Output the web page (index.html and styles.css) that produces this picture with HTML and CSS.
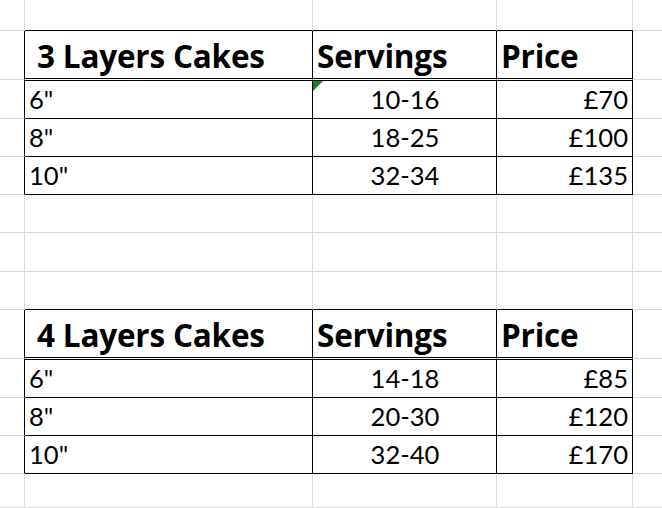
FILE: index.html
```html
<!DOCTYPE html>
<html lang="en">
<head>
<meta charset="utf-8">
<title>Cake prices</title>
<link rel="stylesheet" href="styles.css">
</head>
<body>
<div class="sheet">
  <div class="row h31">
    <div class="cell c0"></div><div class="cell c1 tb"></div><div class="cell c2 tb"></div><div class="cell c3 tb"></div><div class="cell c4"></div>
  </div>
  <div class="row h49">
    <div class="cell c0 tl"></div>
    <div class="cell c1 th first"><span>3 Layers Cakes</span></div>
    <div class="cell c2 th"><span>Servings</span></div>
    <div class="cell c3 th"><span>Price</span></div>
    <div class="cell c4"></div>
  </div>
  <div class="row h39">
    <div class="cell c0 tl"></div>
    <div class="cell c1 td">6"</div>
    <div class="cell c2 td center"><span class="flag"></span>10-16</div>
    <div class="cell c3 td right">£70</div>
    <div class="cell c4"></div>
  </div>
  <div class="row h38">
    <div class="cell c0 tl"></div>
    <div class="cell c1 td">8"</div>
    <div class="cell c2 td center">18-25</div>
    <div class="cell c3 td right">£100</div>
    <div class="cell c4"></div>
  </div>
  <div class="row h38">
    <div class="cell c0 tl"></div>
    <div class="cell c1 td">10"</div>
    <div class="cell c2 td center">32-34</div>
    <div class="cell c3 td right">£135</div>
    <div class="cell c4"></div>
  </div>
  <div class="row h38">
    <div class="cell c0"></div><div class="cell c1"></div><div class="cell c2"></div><div class="cell c3"></div><div class="cell c4"></div>
  </div>
  <div class="row h39">
    <div class="cell c0"></div><div class="cell c1"></div><div class="cell c2"></div><div class="cell c3"></div><div class="cell c4"></div>
  </div>
  <div class="row h38">
    <div class="cell c0"></div><div class="cell c1 tb"></div><div class="cell c2 tb"></div><div class="cell c3 tb"></div><div class="cell c4"></div>
  </div>
  <div class="row h49">
    <div class="cell c0 tl"></div>
    <div class="cell c1 th first"><span>4 Layers Cakes</span></div>
    <div class="cell c2 th"><span>Servings</span></div>
    <div class="cell c3 th"><span>Price</span></div>
    <div class="cell c4"></div>
  </div>
  <div class="row h39">
    <div class="cell c0 tl"></div>
    <div class="cell c1 td">6"</div>
    <div class="cell c2 td center">14-18</div>
    <div class="cell c3 td right">£85</div>
    <div class="cell c4"></div>
  </div>
  <div class="row h38">
    <div class="cell c0 tl"></div>
    <div class="cell c1 td">8"</div>
    <div class="cell c2 td center">20-30</div>
    <div class="cell c3 td right">£120</div>
    <div class="cell c4"></div>
  </div>
  <div class="row h38">
    <div class="cell c0 tl"></div>
    <div class="cell c1 td">10"</div>
    <div class="cell c2 td center">32-40</div>
    <div class="cell c3 td right">£170</div>
    <div class="cell c4"></div>
  </div>
  <div class="row rest">
    <div class="cell c0"></div><div class="cell c1"></div><div class="cell c2"></div><div class="cell c3"></div><div class="cell c4"></div>
  </div>
</div>
</body>
</html>
```

FILE: styles.css
```css
html, body {
  margin: 0;
  padding: 0;
  background: #ffffff;
}

.sheet {
  height: 100vh;
  display: flex;
  flex-direction: column;
  overflow: hidden;
  font-family: Lato, "Open Sans", sans-serif;
  color: #000;
}

.row {
  display: flex;
  flex: none;
}

.h31 { height: 31px; }
.h38 { height: 38px; }
.h39 { height: 39px; }
.h49 { height: 49px; }
.rest { flex: 1; }

.cell {
  box-sizing: border-box;
  border-right: 1px solid #dadada;
  border-bottom: 1px solid #dadada;
  position: relative;
  display: flex;
  align-items: flex-end;
  white-space: nowrap;
}

.c0 { width: 25px; }
.c1 { width: 288px; }
.c2 { width: 184px; }
.c3 { width: 136px; }
.c4 { flex: 1; border-right: none; }

/* table left edge */
.tl { border-right-color: #000; }

/* row above a table: its bottom is the table's top edge */
.tb { border-bottom-color: #000; }

/* header cells with double bottom rule */
.th {
  border-right-color: #000;
  border-bottom-color: #fff;
  box-shadow: inset 0 -1px 0 #000, 0 1px 0 #000;
  font-family: "Open Sans", Lato, sans-serif;
  font-weight: 700;
  font-size: 31.5px;
  letter-spacing: -0.2px;
  line-height: 1;
  padding: 0 0 8px 4px;
}

.th.first { padding-left: 12px; }

.td {
  border-right-color: #000;
  border-bottom-color: #000;
  font-size: 25.6px;
  line-height: 1;
  padding: 0 3px 5px 4px;
}

.center { justify-content: center; }
.right { justify-content: flex-end; padding-right: 4px; }

.flag {
  position: absolute;
  top: 1px;
  left: 0;
  width: 0;
  height: 0;
  border-top: 10px solid #18801f;
  border-right: 10px solid transparent;
}
```
